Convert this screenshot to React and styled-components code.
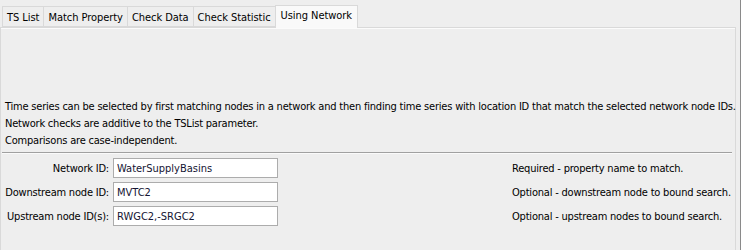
import React from 'react'
import styled, { createGlobalStyle } from 'styled-components';

const GlobalStyle = createGlobalStyle`
    html, body {
        margin: 0;
        padding: 0;
        background: #eeeeee;
    }
    body {
        font-family: "DejaVu Sans Condensed", "Liberation Sans", Arial, sans-serif;
        font-size: 11px;
        color: #000;
    }
`;

const tabs = ['TS List', 'Match Property', 'Check Data', 'Check Statistic', 'Using Network'];

const notes = [
    'Time series can be selected by first matching nodes in a network and then finding time series with location ID that match the selected network node IDs.',
    'Network checks are additive to the TSList parameter.',
    'Comparisons are case-independent.',
];

const fields = [
    { label: 'Network ID:', value: 'WaterSupplyBasins', help: 'Required - property name to match.' },
    { label: 'Downstream node ID:', value: 'MVTC2', help: 'Optional - downstream node to bound search.' },
    { label: 'Upstream node ID(s):', value: 'RWGC2,-SRGC2', help: 'Optional - upstream nodes to bound search.' },
];

function App() {
    return (
        <>
            <GlobalStyle />
            <WindowStyled>
                <TabBar>
                    {tabs.map((t) => (
                        <Tab key={t} $active={t === 'Using Network'}>{t}</Tab>
                    ))}
                </TabBar>
                <Panel>
                    <Notes>
                        {notes.map((n) => <p key={n}>{n}</p>)}
                    </Notes>
                    <Separator />
                    <Form>
                        {fields.map((f) => (
                            <React.Fragment key={f.label}>
                                <Label>{f.label}</Label>
                                <TextField defaultValue={f.value} />
                                <Help>{f.help}</Help>
                            </React.Fragment>
                        ))}
                    </Form>
                </Panel>
            </WindowStyled>
        </>
    )
}

const WindowStyled = styled.div`
    width: 741px;
    height: 250px;
    box-sizing: border-box;
    border-right: 1px solid #8a8a8a;
    padding-right: 4px;
    display: flex;
    flex-direction: column;
    overflow: hidden;
`;

const TabBar = styled.div`
    display: flex;
    align-items: flex-end;
    padding: 6px 0 0 2px;
    height: 27px;
    box-sizing: border-box;
    position: relative;
    z-index: 1;
    letter-spacing: -0.05px;
`;

const Tab = styled.div`
    box-sizing: border-box;
    height: ${p => p.$active ? '23px' : '21px'};
    margin-bottom: ${p => p.$active ? '-1px' : '0'};
    padding: ${p => p.$active ? '2px 5px 0' : '3px 4px 0'};
    margin-left: ${p => p.$active ? '-1px' : '0'};
    margin-right: ${p => p.$active ? '-1px' : '0'};
    background: ${p => p.$active ? '#f9f9f9' : '#eeeeee'};
    border: 1px solid #d9d9d9;
    border-bottom: ${p => p.$active ? 'none' : '1px solid #d9d9d9'};
    border-left: ${p => p.$active ? '1px solid #d9d9d9' : 'none'};
    white-space: nowrap;
    line-height: 15px;
    &:first-child{
        border-left: 1px solid #d9d9d9;
    }
`;

const Panel = styled.div`
    flex: 1;
    border: 1px solid #d9d9d9;
    border-bottom: none;
    box-shadow: inset 0 1px 0 #fbfbfb;
    background: #eeeeee;
    padding-top: 70px;
    letter-spacing: -0.2px;
`;

const Notes = styled.div`
    padding-left: 4px;
    p{
        margin: 0;
        line-height: 17px;
        white-space: nowrap;
    }
`;

const Separator = styled.div`
    height: 1px;
    background: #a0a0a0;
    margin: 3px 3px 0 1px;
    border-bottom: 1px solid #fafafa;
`;

const Form = styled.div`
    display: grid;
    grid-template-columns: 112px 165px 1fr;
    grid-auto-rows: 20px;
    row-gap: 4px;
    padding-top: 4px;
    align-items: center;
`;

const Label = styled.div`
    text-align: right;
    padding-right: 4px;
    white-space: nowrap;
`;

const TextField = styled.input`
    box-sizing: border-box;
    height: 20px;
    width: 165px;
    margin: 0;
    border: 1px solid #acacac;
    background: #fff;
    font: inherit;
    color: #141432;
    padding: 0 3px;
    outline: none;
`;

const Help = styled.div`
    padding-left: 234px;
    white-space: nowrap;
`;

export default App;
